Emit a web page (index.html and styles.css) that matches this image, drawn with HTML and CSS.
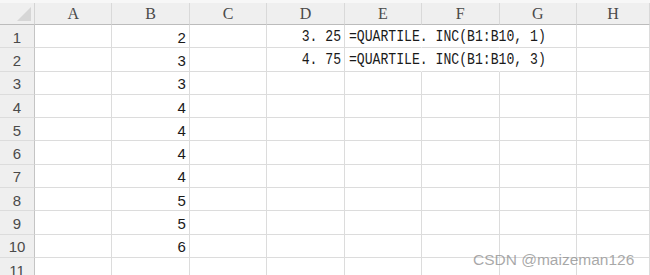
FILE: index.html
```html
<!DOCTYPE html>
<html>
<head>
<meta charset="utf-8">
<link rel="stylesheet" href="styles.css">
</head>
<body>
<div class="sheet">
  <div class="topband"></div>
  <div class="grid">
    <div class="corner"><span class="tri"></span></div>
    <div class="ch">A</div><div class="ch">B</div><div class="ch">C</div><div class="ch">D</div><div class="ch">E</div><div class="ch">F</div><div class="ch">G</div><div class="ch">H</div>

    <div class="rh">1</div><div class="c"></div><div class="c num">2</div><div class="c"></div><div class="c r"><span class="txt tr">3. 25</span></div><div class="c ov"><span class="txt tl">=QUARTILE. INC(B1:B10, 1)</span></div><div class="c ov"></div><div class="c"></div><div class="c"></div>
    <div class="rh">2</div><div class="c"></div><div class="c num">3</div><div class="c"></div><div class="c r"><span class="txt tr">4. 75</span></div><div class="c ov"><span class="txt tl">=QUARTILE. INC(B1:B10, 3)</span></div><div class="c ov"></div><div class="c"></div><div class="c"></div>
    <div class="rh">3</div><div class="c"></div><div class="c num">3</div><div class="c"></div><div class="c"></div><div class="c"></div><div class="c"></div><div class="c"></div><div class="c"></div>
    <div class="rh">4</div><div class="c"></div><div class="c num">4</div><div class="c"></div><div class="c"></div><div class="c"></div><div class="c"></div><div class="c"></div><div class="c"></div>
    <div class="rh">5</div><div class="c"></div><div class="c num">4</div><div class="c"></div><div class="c"></div><div class="c"></div><div class="c"></div><div class="c"></div><div class="c"></div>
    <div class="rh">6</div><div class="c"></div><div class="c num">4</div><div class="c"></div><div class="c"></div><div class="c"></div><div class="c"></div><div class="c"></div><div class="c"></div>
    <div class="rh">7</div><div class="c"></div><div class="c num">4</div><div class="c"></div><div class="c"></div><div class="c"></div><div class="c"></div><div class="c"></div><div class="c"></div>
    <div class="rh">8</div><div class="c"></div><div class="c num">5</div><div class="c"></div><div class="c"></div><div class="c"></div><div class="c"></div><div class="c"></div><div class="c"></div>
    <div class="rh">9</div><div class="c"></div><div class="c num">5</div><div class="c"></div><div class="c"></div><div class="c"></div><div class="c"></div><div class="c"></div><div class="c"></div>
    <div class="rh">10</div><div class="c"></div><div class="c num">6</div><div class="c"></div><div class="c"></div><div class="c"></div><div class="c"></div><div class="c"></div><div class="c"></div>
    <div class="rh">11</div><div class="c"></div><div class="c"></div><div class="c"></div><div class="c"></div><div class="c"></div><div class="c"></div><div class="c"></div><div class="c"></div>
  </div>
  <div class="watermark">CSDN @maizeman126</div>
</div>
</body>
</html>
```

FILE: styles.css
```css
* { box-sizing: border-box; }
html, body { margin: 0; padding: 0; background: #ffffff; }
.sheet {
  position: relative;
  width: 650px;
  height: 275px;
  overflow: hidden;
  background: #ffffff;
}
.topband {
  height: 3px;
  background: #f7f7f7;
}
.grid {
  display: grid;
  grid-template-columns: 35px repeat(7, 77.43px) 1fr;
  grid-template-rows: 22px repeat(11, 23.3px);
}
.corner {
  position: relative;
  background: #efefef;
  border-right: 1px solid #d4d4d4;
  border-bottom: 1px solid #bcbcbc;
}
.tri {
  position: absolute;
  right: 3px;
  bottom: 3px;
  width: 0;
  height: 0;
  border-left: 14px solid transparent;
  border-bottom: 14px solid #d6d6d6;
}
.ch {
  background: #efefef;
  border-right: 1px solid #d9d9d9;
  border-bottom: 1px solid #bcbcbc;
  color: #4a4a4a;
  font-family: "Liberation Serif", serif;
  font-size: 16px;
  display: flex;
  align-items: center;
  justify-content: center;
  padding-top: 1px;
}
.rh {
  background: #efefef;
  border-right: 1px solid #c4c4c4;
  border-bottom: 1px solid #dcdcdc;
  color: #4a4a4a;
  font-family: "Liberation Sans", sans-serif;
  font-size: 15px;
  display: flex;
  align-items: center;
  justify-content: center;
  padding-top: 2px;
}
.c {
  border-right: 1px solid #dcdcdc;
  border-bottom: 1px solid #dcdcdc;
  display: flex;
  align-items: center;
  padding-top: 2px;
  color: #1a1a1a;
  white-space: nowrap;
}
.num {
  justify-content: flex-end;
  padding-right: 3px;
  font-family: "Liberation Sans", sans-serif;
  font-size: 15px;
}
.txt {
  display: inline-block;
  font-family: "Liberation Mono", monospace;
  font-size: 16px;
  transform: scaleX(0.82);
}
.tl { transform-origin: left center; }
.tr { transform-origin: right center; }
.r {
  justify-content: flex-end;
  padding-right: 3px;
}
.ov {
  overflow: visible;
  padding-left: 4px;
  border-right-color: transparent;
}
.watermark {
  position: absolute;
  left: 473px;
  top: 251px;
  font-family: "Liberation Sans", sans-serif;
  font-size: 15.5px;
  color: rgba(140, 140, 140, 0.75);
  white-space: nowrap;
}
```
